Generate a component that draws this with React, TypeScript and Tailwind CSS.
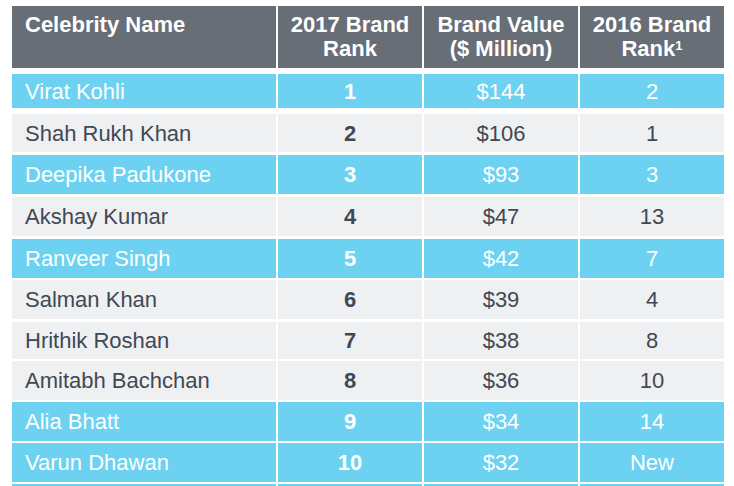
const rows = [
  { name: "Virat Kohli", rank: "1", value: "$144", prev: "2", hi: true, h: "h-[38px] pb-[4px]" },
  { name: "Shah Rukh Khan", rank: "2", value: "$106", prev: "1", hi: false, h: "h-[39px] pb-[1px]" },
  { name: "Deepika Padukone", rank: "3", value: "$93", prev: "3", hi: true, h: "h-[40px] pb-[1px]" },
  { name: "Akshay Kumar", rank: "4", value: "$47", prev: "13", hi: false, h: "h-[40px] pb-[1px]" },
  { name: "Ranveer Singh", rank: "5", value: "$42", prev: "7", hi: true, h: "h-[39px]" },
  { name: "Salman Khan", rank: "6", value: "$39", prev: "4", hi: false, h: "h-[40px] pb-[1px]" },
  { name: "Hrithik Roshan", rank: "7", value: "$38", prev: "8", hi: false, h: "h-[37px]" },
  { name: "Amitabh Bachchan", rank: "8", value: "$36", prev: "10", hi: false, h: "h-[39px]" },
  { name: "Alia Bhatt", rank: "9", value: "$34", prev: "14", hi: true, h: "h-[39px]" },
  { name: "Varun Dhawan", rank: "10", value: "$32", prev: "New", hi: true, h: "h-[39px]" },
  { name: "", rank: "", value: "", prev: "", hi: true, h: "h-[39px]" },
];

const cols = "grid grid-cols-[264px_144px_154px_144px] gap-x-[2px]";

export default function App() {
  return (
    <div
      className="w-[734px] h-[486px] overflow-hidden bg-white pl-[12px] pt-[6px]"
      style={{ fontFamily: '"Liberation Sans", Arial, sans-serif' }}
    >
      {/* Header */}
      <div className={`${cols} h-[62px] text-[22px] leading-[24px] font-bold text-white`}>
        <div className="bg-[#686e76] pl-[13px] pt-[7px]">Celebrity Name</div>
        <div className="bg-[#686e76] pt-[7px] text-center">
          2017 Brand
          <br />
          Rank
        </div>
        <div className="bg-[#686e76] pt-[7px] text-center">
          Brand Value
          <br />
          ($ Million)
        </div>
        <div className="bg-[#686e76] pt-[7px] text-center">
          2016 Brand
          <br />
          Rank<sup className="text-[13px]">1</sup>
        </div>
      </div>

      {/* Body */}
      <div className="mt-[6px] flex flex-col gap-y-[2px] text-[22px]">
        {rows.map((r, i) => {
          const cell = r.hi ? "bg-[#6dd2f1] text-white" : "bg-[#eff0f2] text-[#3e4954]";
          return (
            <div key={i} className={`${cols} ${r.h}`}>
              <div className={`${cell} flex items-center pl-[13px]`}>{r.name}</div>
              <div className={`${cell} flex items-center justify-center font-bold`}>{r.rank}</div>
              <div className={`${cell} flex items-center justify-center`}>{r.value}</div>
              <div className={`${cell} flex items-center justify-center`}>{r.prev}</div>
            </div>
          );
        })}
      </div>
    </div>
  );
}
